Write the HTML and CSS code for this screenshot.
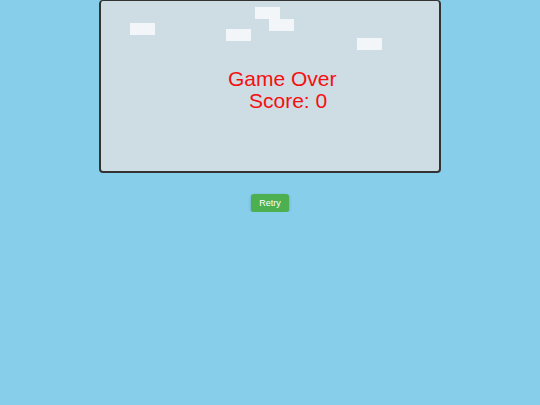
FILE: index.html
```html
<!DOCTYPE html>
<html>
<head>
<meta charset="utf-8">
<link rel="stylesheet" href="styles.css">
</head>
<body>
<main class="page">
  <div class="board">
    <div class="brick" style="left:29px;top:22px"></div>
    <div class="brick" style="left:154px;top:6px"></div>
    <div class="brick" style="left:168px;top:18px"></div>
    <div class="brick" style="left:125px;top:28px"></div>
    <div class="brick" style="left:256px;top:37px"></div>
    <div class="message">
      <div class="line1">Game Over</div>
      <div class="line2">Score: 0</div>
    </div>
  </div>
  <button class="retry">Retry</button>
</main>
</body>
</html>
```
FILE: styles.css
```css
html, body {
  margin: 0;
  padding: 0;
  background: #87ceeb;
  font-family: "Liberation Sans", Arial, sans-serif;
}
.page {
  display: flex;
  flex-direction: column;
  align-items: center;
}
.board {
  position: relative;
  width: 338px;
  height: 170px;
  border: 2px solid #333;
  border-top-width: 1px;
  border-radius: 4px;
  background: #cedce4;
  overflow: hidden;
}
.brick {
  position: absolute;
  width: 25px;
  height: 12px;
  background: #f3f6f8;
}
.message {
  position: absolute;
  left: 127px;
  top: 67px;
  color: #f50f0f;
  font-size: 21px;
  line-height: 21.6px;
}
.line2 {
  margin-left: 21px;
}
.retry {
  margin-top: 21px;
  height: 18px;
  padding: 0 8px;
  border: none;
  border-radius: 3px;
  background: #4caf50;
  color: #fff;
  font-family: "Liberation Sans", Arial, sans-serif;
  font-size: 9px;
  box-shadow: 0 1px 3px rgba(0,0,0,0.25);
}
```
